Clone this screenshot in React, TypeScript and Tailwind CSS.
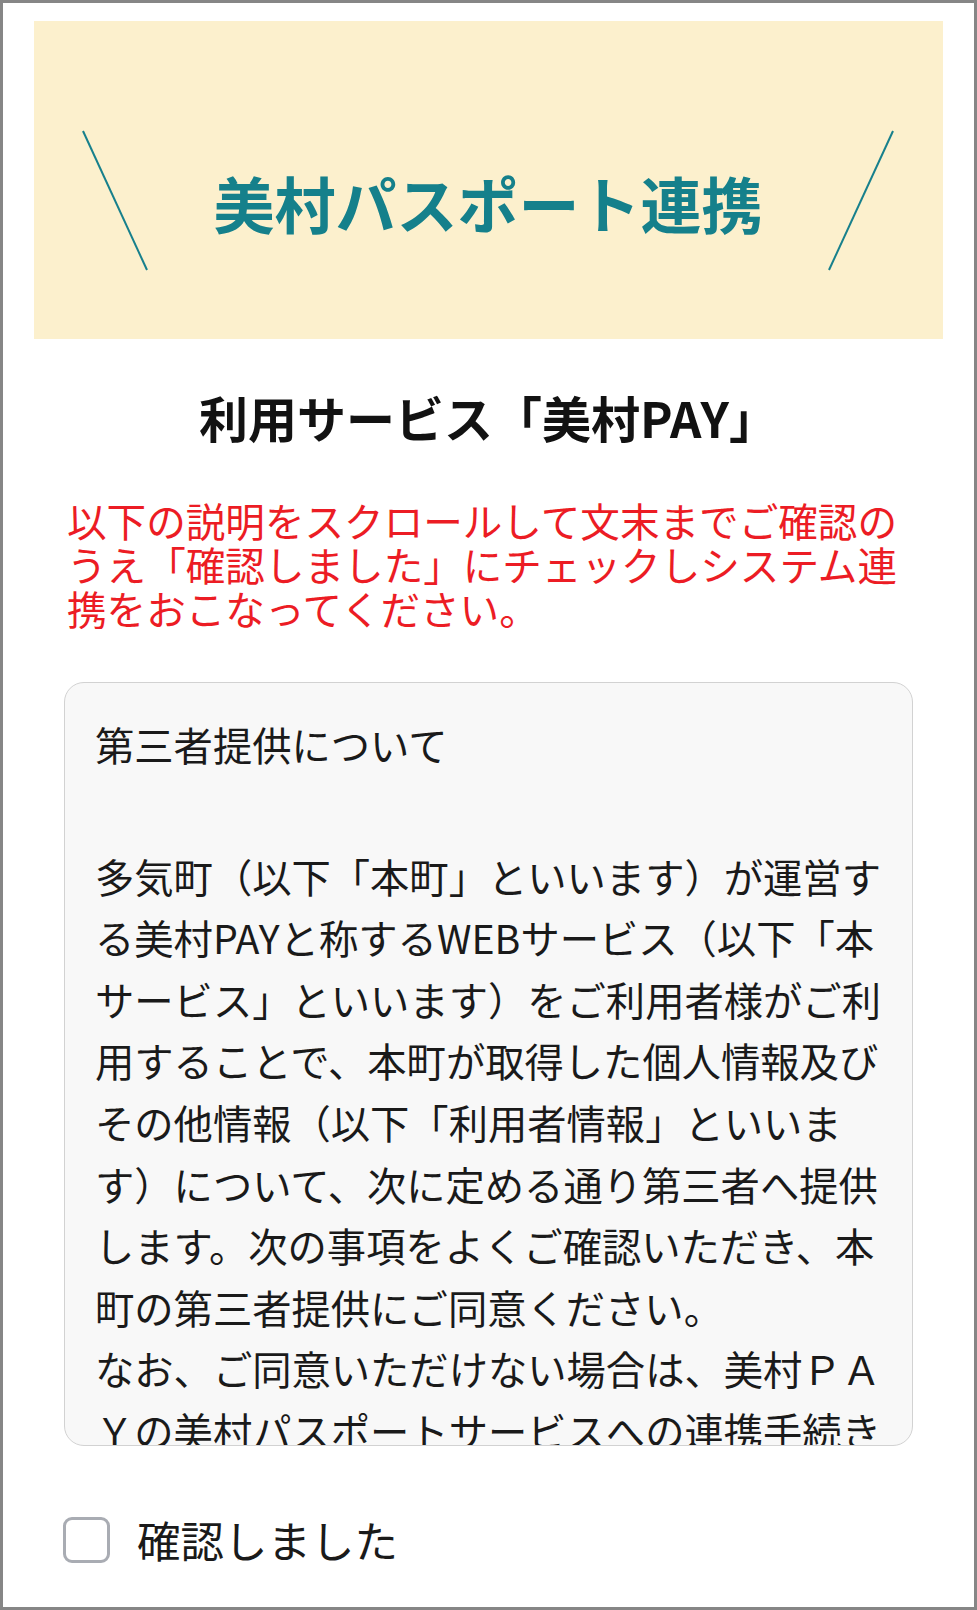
import React from "react";

const bodyLines = [
  "多気町（以下「本町」といいます）が運営す",
  "る美村PAYと称するWEBサービス（以下「本",
  "サービス」といいます）をご利用者様がご利",
  "用することで、本町が取得した個人情報及び",
  "その他情報（以下「利用者情報」といいま",
  "す）について、次に定める通り第三者へ提供",
  "します。次の事項をよくご確認いただき、本",
  "町の第三者提供にご同意ください。",
  "なお、ご同意いただけない場合は、美村ＰＡ",
  "Ｙの美村パスポートサービスへの連携手続き",
];

function Slash({ dir }: { dir: "left" | "right" }) {
  return (
    <svg width="66" height="141" viewBox="0 0 66 141" className="mt-[109px] shrink-0">
      {dir === "left" ? (
        <line x1="1" y1="1" x2="65" y2="140" stroke="#17808c" strokeWidth="2" />
      ) : (
        <line x1="65" y1="1" x2="1" y2="140" stroke="#17808c" strokeWidth="2" />
      )}
    </svg>
  );
}

export default function App() {
  return (
    <div
      className="w-[977px] h-[1610px] overflow-hidden border-[3px] border-[#868686] bg-white"
      style={{ fontFamily: '"Noto Sans CJK JP", "Noto Sans", sans-serif' }}
    >
      <div className="mx-[31px] mt-[18px] h-[318px] bg-[#fcf0cd] flex pl-[48px] pr-[49px]">
        <Slash dir="left" />
        <div className="flex-1 text-center mt-[151px] text-[61px] leading-none font-bold text-[#15808b] whitespace-nowrap">
          美村パスポート連携
        </div>
        <Slash dir="right" />
      </div>

      <div className="mt-[48px] text-center text-[49px] leading-[60px] font-bold text-[#121212] whitespace-nowrap">
        利用サービス「美村PAY」
      </div>

      <div className="mt-[51px] ml-[64px] text-[39.6px] leading-[44px] text-[#ec1c24] whitespace-nowrap">
        以下の説明をスクロールして文末までご確認の
        <br />
        うえ「確認しました」にチェックしシステム連
        <br />
        携をおこなってください。
      </div>

      <div className="mt-[52px] mx-[61px] h-[764px] overflow-hidden rounded-[20px] border-[1.5px] border-[#d2d2d2] bg-[#f8f8f8] pl-[30px] pt-[30px] text-[39.3px] leading-[61.6px] text-[#1a1a1a]">
        <div className="whitespace-nowrap">第三者提供について</div>
        <div className="mt-[70px]">
          {bodyLines.map((l, i) => (
            <div key={i} className="whitespace-nowrap">
              {l}
            </div>
          ))}
        </div>
      </div>

      <div className="mt-[71px] ml-[60px] flex items-center gap-[27px]">
        <div className="w-[47px] h-[46px] rounded-[9px] border-[3px] border-[#a9acb3] bg-white shrink-0" />
        <div className="text-[43.5px] leading-none text-[#1a1a1a] whitespace-nowrap">確認しました</div>
      </div>
    </div>
  );
}
